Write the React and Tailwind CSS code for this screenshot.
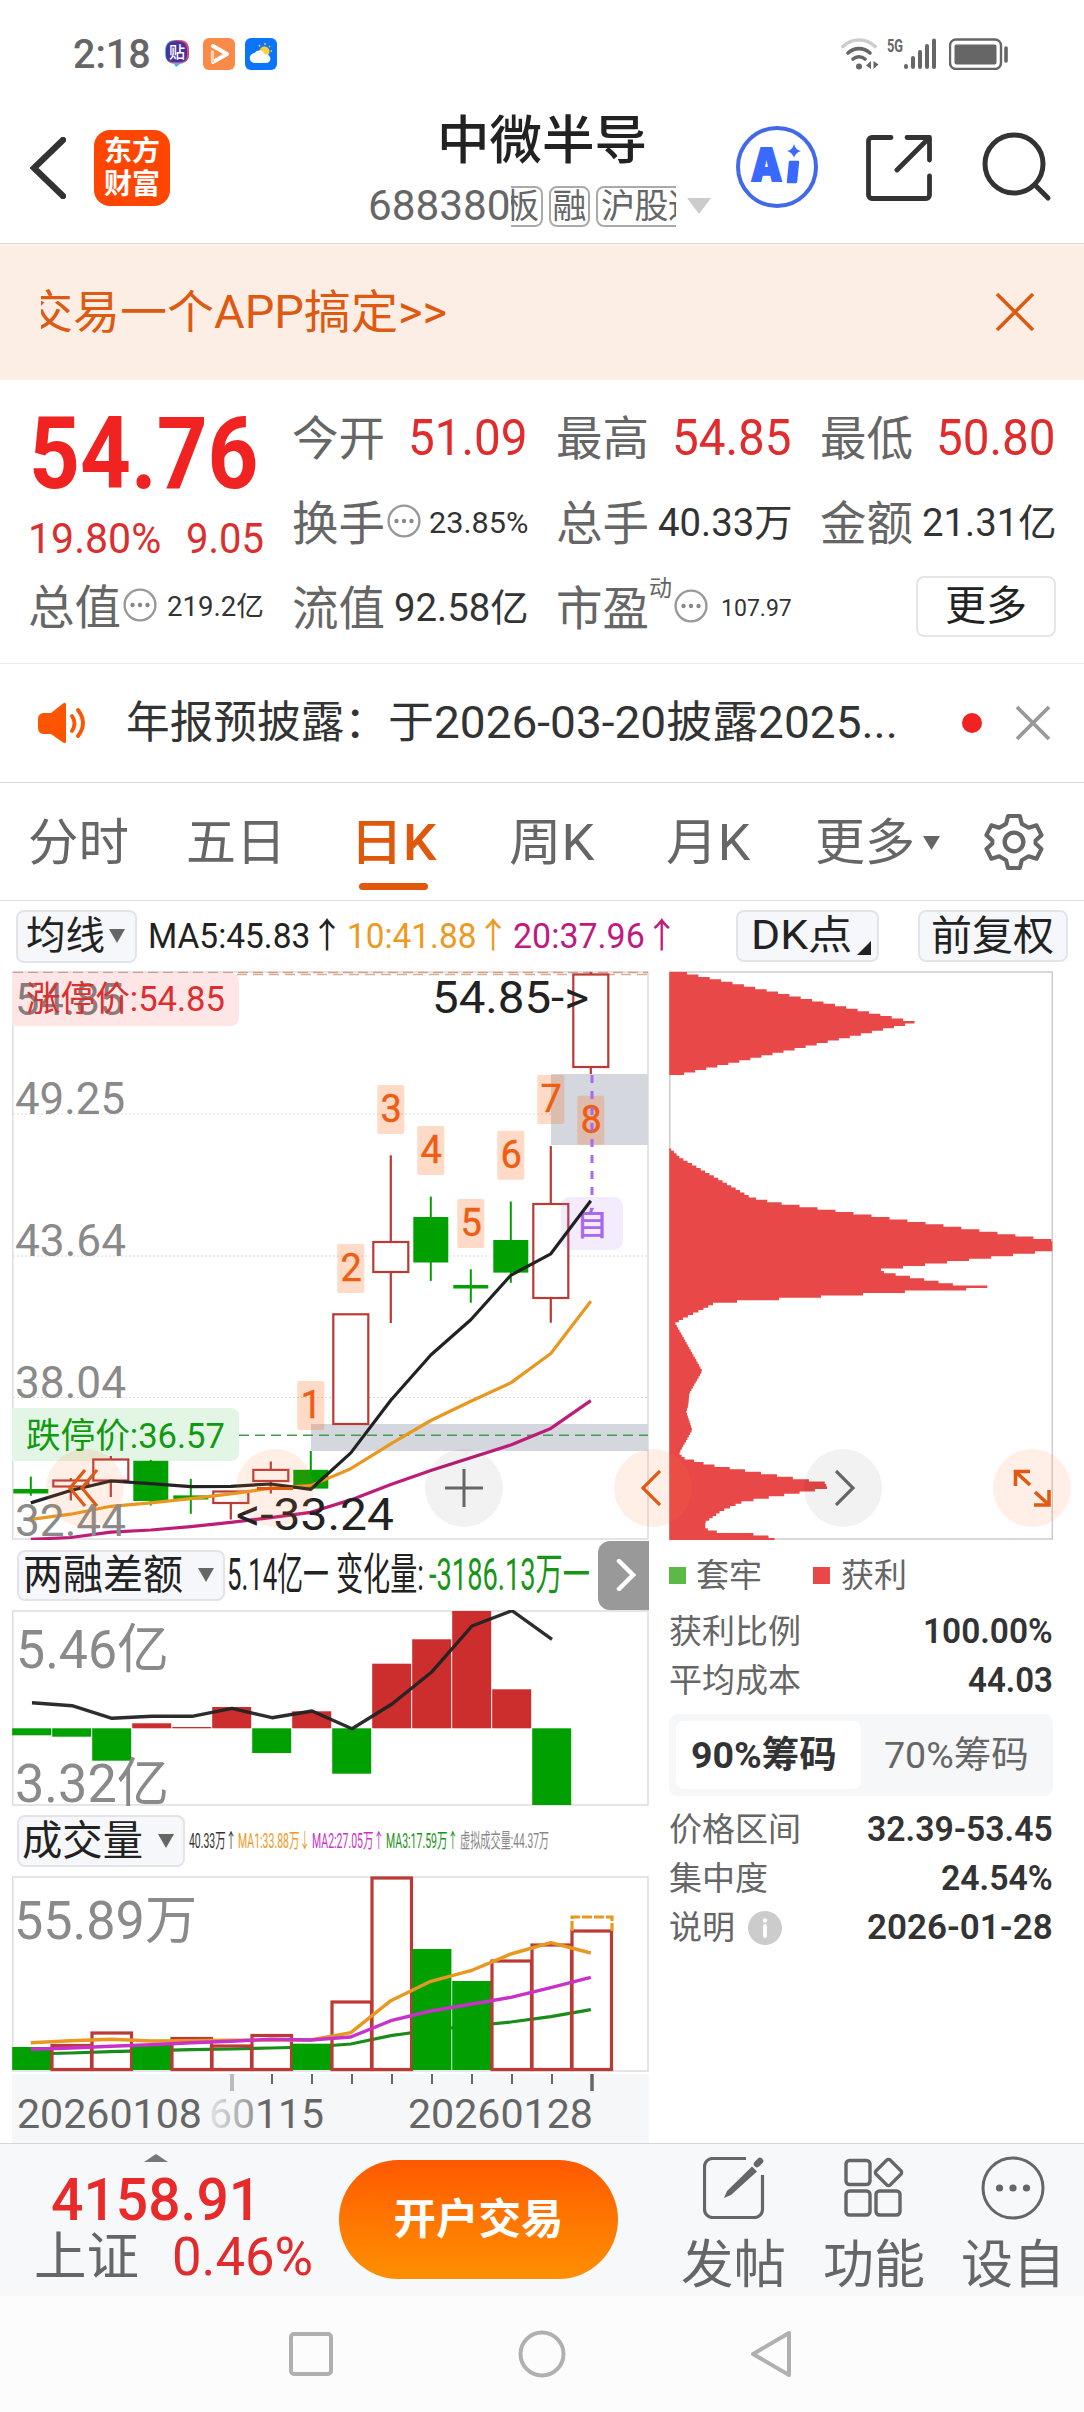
import { useLayoutEffect, useRef, useState } from "react";

const X0 = 30.8;
const STEP = 40;
const RED = "#bb3a36";
const GREEN = "#00a000";

// [type, body top, body bottom, wick top, wick bottom]
const candles = [
    ["g", 1489, 1493.5, 1476.6, 1495.7],
    ["r", 1480.5, 1486.5, 1478, 1500.6],
    ["r", 1459.5, 1480.5, 1455.9, 1496.9],
    ["g", 1460.8, 1501, 1460, 1505.5],
    ["g", 1495.4, 1499.5, 1478.8, 1513.8],
    ["r", 1491.5, 1503, 1491, 1519.4],
    ["r", 1469.9, 1481, 1461.5, 1493.5],
    ["g", 1469.8, 1488.6, 1451, 1488],
    ["r", 1314.3, 1424, 1314, 1424],
    ["r", 1242, 1272, 1155.3, 1323],
    ["g", 1217, 1262.5, 1196.6, 1280.9],
    ["g", 1285, 1288.5, 1269.3, 1302.7],
    ["g", 1240, 1272.6, 1201.5, 1282.8],
    ["r", 1204, 1298, 1145.9, 1322.7],
    ["r", 974.5, 1067, 972, 1074],
];

const ma5 = [1502.9, 1490.5, 1481, 1483.7, 1486.7, 1486.3, 1484, 1489.3, 1452.9, 1400.2, 1355, 1319.7, 1275.3, 1253.8, 1200.8];
const ma10 = [1519.4, 1514.2, 1506.3, 1502.9, 1498.7, 1493.9, 1488.2, 1485.6, 1468.7, 1443.8, 1420.5, 1401.3, 1382.9, 1353.5, 1301.2];
const ma20 = [1539.4, 1537.5, 1532.2, 1530, 1526.6, 1522.4, 1517.6, 1512.3, 1499.9, 1484.5, 1470.5, 1457.7, 1445, 1428.4, 1400.6];

const days = [
    [7, 1381], [8, 1244], [9, 1085], [10, 1126], [11, 1199], [12, 1130.8], [13, 1075], [14, 1095.8],
];

const marginBars = [1735.3, 1736.7, 1760.7, 1723.3, 1727, 1707, 1753, 1711.3, 1773.7, 1663.7, 1639.3, 1611, 1689.3, 1805];
const marginLine = [1702.7, 1705.7, 1718.3, 1716.3, 1716.3, 1708.3, 1717.7, 1711, 1728.7, 1704, 1671.7, 1626, 1610.7, 1639.3];

const volume = [
    ["g", 2047], ["r", 2045.5], ["r", 2033], ["g", 2045], ["r", 2038.5], ["r", 2046], ["r", 2035.5], ["g", 2043.7],
    ["r", 2002], ["r", 1878], ["g", 1949], ["g", 1981], ["r", 1961], ["r", 1945], ["r", 1931],
];
const vol1 = [2042.7, 2040.7, 2039.3, 2041, 2040.7, 2040.3, 2040, 2040, 2032.7, 2000.7, 1981.3, 1970.7, 1954, 1942.7, 1953];
const vol2 = [2049.3, 2048, 2046.3, 2044.7, 2042.7, 2041.3, 2039.3, 2040, 2037, 2020.7, 2011, 2004.3, 1997.3, 1987.7, 1977.3];
const vol3 = [2054, 2053, 2051.7, 2050.7, 2049.7, 2049, 2048, 2047, 2044, 2035.7, 2030, 2026, 2022, 2016.7, 2009.7];

// cost distribution profile: [y, width]
const chips = [
    [972, 12], [1022.4, 246], [1074.3, 12], [1074.8, 0], [1147.8, 0], [1157.6, 10.7], [1197.6, 82], [1202.4, 104],
    [1240.4, 383], [1250.6, 383], [1270.2, 207], [1273.5, 220], [1285.3, 289], [1286.4, 318], [1289, 318], [1289.6, 272],
    [1302.8, 46], [1309, 34], [1318.4, 14], [1323.3, 6], [1371, 33], [1393.5, 20], [1405, 19], [1412, 17],
    [1430, 23], [1453, 10], [1458, 14], [1465, 41], [1470, 72], [1482.9, 156], [1488.2, 158], [1501.6, 74],
    [1511, 52], [1522.4, 36], [1527.3, 36], [1531.4, 41], [1535, 95], [1539.5, 106],
];

const toPoints = (ys, x0 = X0) => ys.map((y, i) => `${x0 + i * STEP},${y}`).join(" ");

// Stepped outline of the distribution, one step per price level
function chipPath() {
    const h = 2.45;
    let d = "M669.3 972";
    for (let y = 972; y < 1538.5; y += h) {
        const mid = y + h / 2;
        const k = chips.findIndex(([cy]) => cy > mid);
        const [ya, wa] = chips[k - 1];
        const [yb, wb] = chips[k];
        const w = wa + ((wb - wa) * (mid - ya)) / (yb - ya);
        d += `H${(669.3 + w).toFixed(1)}V${(y + h).toFixed(2)}`;
    }
    return d + "H669.3Z";
}

// Squeezes or stretches one line of text to the width of its box
function FitText({ className = "", children }) {
    const box = useRef(null);
    const text = useRef(null);
    const [scale, setScale] = useState(1);

    useLayoutEffect(() => {
        setScale(box.current.clientWidth / text.current.offsetWidth);
    }, [children]);

    return (
        <span ref={box} className={`block shrink-0 leading-none ${className}`}>
            <span ref={text} className="inline-block origin-left whitespace-nowrap" style={{ transform: `scaleX(${scale})` }}>
                {children}
            </span>
        </span>
    );
}

function DotsIcon() {
    return (
        <svg viewBox="0 0 34 34" className="w-[34px] h-[34px] shrink-0">
            <circle cx="17" cy="17" r="15.4" fill="none" stroke="#999" strokeWidth="2.4" />
            <circle cx="9.5" cy="17" r="2.2" fill="#888" />
            <circle cx="17" cy="17" r="2.2" fill="#888" />
            <circle cx="24.5" cy="17" r="2.2" fill="#888" />
        </svg>
    );
}

function Caret({ className }) {
    return (
        <svg viewBox="0 0 16 14" preserveAspectRatio="none" className={`shrink-0 ${className}`}>
            <path d="M0 0h16L8 14z" fill="currentColor" />
        </svg>
    );
}

function StatusBar() {
    return (
        <div className="h-[100px] flex items-start pt-[38px] pl-[73px] pr-[75px] text-[#666]">
            <FitText className="w-[78px] text-[41px] font-medium -mt-1">2:18</FitText>
            <svg viewBox="0 0 24 28" className="w-6 h-7 ml-[14px] mt-0.5">
                <path d="M12 0c8 0 12 3 12 11v2c0 7-3 10-9 11l-4 3-2-3c-6-1-9-4-9-11v-2C0 3 4 0 12 0z" fill="#4bb4f5" />
                <path d="M13 0c8 0 11 3 11 11v3c0 6-3 9-10 9H9c-6 0-8-3-8-9v-3C1 4 5 0 13 0z" fill="#e5436f" />
                <path d="M11 1c8 0 11 3 11 10v3c0 6-2 8-8 8H9c-6 0-8-2-8-8v-3C1 4 4 1 11 1z" fill="#47339c" />
                <text x="12" y="18" textAnchor="middle" fontSize="16" fontWeight="500" fill="#fff">贴</text>
            </svg>
            <svg viewBox="0 0 32 32" className="w-8 h-8 ml-[14px]">
                <rect width="32" height="32" rx="6" fill="#f98a47" />
                <path d="M10 8l14 8-14 8" fill="none" stroke="#fff" strokeWidth="4" strokeLinecap="round" strokeLinejoin="round" />
                <path d="M9.5 14v9" stroke="#fdd3b5" strokeWidth="3.4" strokeLinecap="round" />
            </svg>
            <svg viewBox="0 0 32 32" className="w-8 h-8 ml-[10px]">
                <rect width="32" height="32" rx="6" fill="#0b74fb" />
                <path d="M20 5v2M25 8l-1 1M27 13h-1.5M14 7l1 1.5" stroke="#ffcf3a" strokeWidth="1.4" />
                <circle cx="19.5" cy="13.5" r="5" fill="#ffcf3a" />
                <path d="M10 25a5 5 0 0 1-.5-10 6 6 0 0 1 10.5 1.5A4.3 4.3 0 0 1 22 25z" fill="#fff" />
            </svg>
            <svg viewBox="0 0 38 32" className="w-[38px] h-8 ml-auto">
                <path d="M2 8.5a23 23 0 0 1 32 0" fill="none" stroke="#ccc" strokeWidth="3.6" strokeLinecap="round" />
                <path d="M7 15a16 16 0 0 1 22 0" fill="none" stroke="#666" strokeWidth="3.6" strokeLinecap="round" />
                <path d="M12 21a9 9 0 0 1 12 0" fill="none" stroke="#666" strokeWidth="3.6" strokeLinecap="round" />
                <circle cx="18" cy="28.5" r="3" fill="#666" />
                <path d="M30 23v8l-5-3.5zM32.5 23v8l5-4.5z" fill="#666" />
            </svg>
            <svg viewBox="0 0 50 32" className="w-[50px] h-8 ml-2">
                <text x="0" y="14" fontSize="18" fontWeight="700" fill="#666" textLength="16" lengthAdjust="spacingAndGlyphs">5G</text>
                <path d="M19 28v1M26 20v9M33 14v15M40 8v21M47 2.5V29" stroke="#666" strokeWidth="4" strokeLinecap="round" />
            </svg>
            <svg viewBox="0 0 60 32" className="w-[60px] h-8 ml-3">
                <rect x="1" y="1.5" width="51" height="29.5" rx="6" fill="none" stroke="#666" strokeWidth="2.4" />
                <rect x="5.5" y="6.5" width="42" height="20" rx="2" fill="#666" />
                <path d="M57 10v13" stroke="#666" strokeWidth="3.6" strokeLinecap="round" />
            </svg>
        </div>
    );
}

function Header() {
    return (
        <header className="h-36 flex items-start border-b border-[#ddd]">
            <svg viewBox="0 0 36 62" className="w-9 h-[62px] ml-[30px] mt-[37px]">
                <path d="M33 3L4 31l29 28" fill="none" stroke="#333" strokeWidth="6.4" strokeLinecap="round" />
            </svg>
            <div className="w-[76px] h-[76px] ml-7 mt-[30px] rounded-2xl bg-[#ff4600] text-white text-[28px] font-bold leading-[33px] text-center pt-[5px]">
                <div>东方</div>
                <div>财富</div>
            </div>
            <div className="w-[343px] ml-[198px]">
                <FitText className="w-[210px] ml-[69px] mt-[16px] text-[52px] font-medium text-[#222]">中微半导</FitText>
                <div className="flex items-center mt-[16px] h-11 text-[#666]">
                    <FitText className="w-[143px] text-[42px]">688380</FitText>
                    <div className="w-[165px] flex gap-[6px] overflow-hidden text-[34px] leading-[37px]">
                        <span className="shrink-0 w-[38px] -ml-[6px] h-[41px] border-2 border-l-0 border-[#aaa] rounded-r-lg">板</span>
                        <span className="shrink-0 h-[41px] w-[41px] border-2 border-[#aaa] rounded-lg flex justify-center">融</span>
                        <span className="shrink-0 h-[41px] pl-[3px] border-2 border-[#aaa] rounded-lg tracking-[-0.5px]">沪股通</span>
                    </div>
                    <Caret className="w-6 h-[16px] ml-[11px] text-[#ccc]" />
                </div>
            </div>
            <svg viewBox="0 0 82 82" className="w-[82px] h-[82px] ml-[25px] mt-[26px]">
                <circle cx="41" cy="41" r="39" fill="none" stroke="#4169ea" strokeWidth="4" />
                <text x="15" y="55" fontSize="46" fontWeight="900" fill="#3a69ff" stroke="#3a69ff" strokeWidth="2" textLength="31" lengthAdjust="spacingAndGlyphs" className="font-['Inter']">A</text>
                <path d="M54 36h8l-2 20h-8z" fill="#3a69ff" stroke="#3a69ff" strokeWidth="2.4" strokeLinejoin="round" />
                <path d="M58 18q1.5 6 7 7-5.5 1.5-7 7-1.5-5.5-7-7 5.5-1 7-7z" fill="#3a69ff" />
            </svg>
            <svg viewBox="0 0 66 66" className="w-[66px] h-[66px] ml-12 mt-[35px]" fill="none" stroke="#333" strokeWidth="4.8" strokeLinecap="round" strokeLinejoin="round">
                <path d="M25 2.5H6a3.5 3.5 0 0 0-3.5 3.5V60A3.5 3.5 0 0 0 6 63.5H60A3.5 3.5 0 0 0 63.5 60V41" />
                <path d="M41 2.5h22.5V25M63 3L31 35" />
            </svg>
            <svg viewBox="0 0 70 70" className="w-[70px] h-[70px] ml-[50px] mt-8" fill="none" stroke="#333" strokeWidth="5" strokeLinecap="round">
                <circle cx="32" cy="32" r="29" />
                <path d="M53 53l13 13" />
            </svg>
        </header>
    );
}

function Banner() {
    return (
        <div className="h-[136px] flex items-center bg-[#fceee5] pl-[41px] pr-[49px] text-[#dd5a12]">
            <div className="w-[900px] overflow-hidden">
                <FitText className="w-[421px] text-[46px] -ml-[15px] py-1">交易一个APP搞定&gt;&gt;</FitText>
            </div>
            <svg viewBox="0 0 40 40" className="w-10 h-10 ml-auto">
                <path d="M2 2l36 36M38 2L2 38" stroke="currentColor" strokeWidth="3.6" />
            </svg>
        </div>
    );
}

function Cell({ label, value, size = "text-[38px] w-[134px]", icon, note, className = "" }) {
    return (
        <div className={`flex items-center h-[60px] pl-px ${className}`}>
            <FitText className="w-[93px] text-[47px] text-[#666]">{label}</FitText>
            {note && <span className="text-[23px] leading-none text-[#666] mb-10">{note}</span>}
            {icon && <div className="ml-0.5 -mt-1"><DotsIcon /></div>}
            <FitText className={`ml-auto ${size}`}>{value}</FitText>
        </div>
    );
}

function Quote() {
    return (
        <section className="h-[284px] flex border-b border-[#eaeaea] pt-[28px] text-[#333]">
            <div className="w-[237px] ml-[27px]">
                <FitText className="w-[230px] ml-[2px] text-[100px] font-bold text-[#f02222] h-[94px] -mt-4 pt-3">54.76</FitText>
                <div className="flex justify-between text-[42px] text-[#da2f2f] mt-[36px] h-[34px] items-center">
                    <FitText className="w-[133px] ml-px">19.80%</FitText>
                    <FitText className="w-[78px]">9.05</FitText>
                </div>
                <Cell label="总值" icon value="219.2亿" size="text-[27px] w-[97px]" className="mt-[21px]" />
            </div>
            <div className="grid grid-cols-[237px_237px_237px] gap-x-[27px] gap-y-[25px] ml-[27px] content-start">
                <Cell label="今开" value="51.09" size="text-[50px] w-[120px] text-[#e02c2c]" />
                <Cell label="最高" value="54.85" size="text-[50px] w-[120px] text-[#e02c2c]" />
                <Cell label="最低" value="50.80" size="text-[50px] w-[120px] text-[#e02c2c]" />
                <Cell label="换手" icon value="23.85%" size="text-[30px] w-[99px]" />
                <Cell label="总手" value="40.33万" />
                <Cell label="金额" value="21.31亿" />
                <Cell label="流值" value="92.58亿" />
                <Cell label="市盈" note="动" icon value="107.97" size="text-[24px] w-[71px]" />
                <button className="w-[140px] h-[61px] -mt-0.5 ml-auto border-2 border-[#e6e6e6] rounded-lg text-[41px] leading-none text-[#222]">更多</button>
            </div>
        </section>
    );
}

function News() {
    return (
        <div className="h-[119px] flex items-center border-b border-[#ddd] pl-[38px] text-[#333]">
            <svg viewBox="0 0 50 42" className="w-[50px] h-[42px]">
                <path d="M5 11h8L25 1.5q3-2 3 1v37q0 3-3 1L13 32H5q-5-1-5-6v-9q0-5 5-6z" fill="#ff5500" />
                <path d="M34 14q5 7 0 15M40 8q10 13 0 26" fill="none" stroke="#ff5500" strokeWidth="3.8" strokeLinecap="round" />
            </svg>
            <div className="flex ml-[38px] text-[44px]">
                <FitText className="w-[262px]">年报预披露：</FitText>
                <FitText className="w-[510px]">于2026-03-20披露2025...</FitText>
            </div>
            <span className="w-5 h-5 rounded-full bg-[#f02222] ml-[64px]" />
            <svg viewBox="0 0 36 36" className="w-9 h-9 ml-[33px]">
                <path d="M2 2l32 32M34 2L2 34" stroke="#999" strokeWidth="3.8" />
            </svg>
        </div>
    );
}

function Tabs() {
    return (
        <nav className="h-[118px] flex items-center border-b border-[#ddd] pl-[28px] pt-0.5 text-[50px] text-[#666]">
            <FitText className="w-[101px]">分时</FitText>
            <FitText className="w-[100px] ml-[57px]">五日</FitText>
            <div className="relative ml-[64px] text-[#e0580c]">
                <FitText className="w-[87px] font-medium">日K</FitText>
                <span className="absolute left-[9px] top-[65px] w-[69px] h-[7px] rounded-full bg-[#e0580c]" />
            </div>
            <FitText className="w-[85px] ml-[72px]">周K</FitText>
            <FitText className="w-[84px] ml-[72px]">月K</FitText>
            <FitText className="w-[100px] ml-[65px]">更多</FitText>
            <Caret className="w-[17px] h-[14px] ml-2" />
            <svg viewBox="0 0 58 58" className="w-[60px] h-[60px] ml-[44px]" fill="none" stroke="#666" strokeWidth="4.2" strokeLinejoin="round">
                <path d="M23 2.5h12l2 8 7 4 8-2.500 5 10-6 5.500v3l6 5.500-5 10-8-2.500-7 4-2 8H23l-2-8-7-4-8 2.500-5-10 6-5.500v-3L1 22l5-10 8 2.500 7-4z" transform="translate(1.4 .5) scale(.95)" />
                <circle cx="29" cy="28" r="9" />
            </svg>
        </nav>
    );
}

const chipButton = "flex items-center bg-[#f6f7fa] border-2 border-[#e2e4e9] rounded-lg text-[#222]";

function Toolbar() {
    return (
        <div className="h-[70px] flex items-center pl-[16px] text-[35px]">
            <button className={`${chipButton} w-[121px] h-[53px] pl-[8px]`}>
                <FitText className="w-[79px] text-[39px]">均线</FitText>
                <Caret className="w-4 h-[14px] ml-[4px] text-[#666]" />
            </button>
            <FitText className="w-[196px] ml-[11px] text-[#222]">MA5:45.83↑</FitText>
            <FitText className="w-[163px] ml-[3px] text-[#ec9a22]">10:41.88↑</FitText>
            <FitText className="w-[166px] ml-[3px] text-[#c01a80]">20:37.96↑</FitText>
            <button className={`${chipButton} w-[143px] h-[52px] ml-[57px] pl-[8px]`}>
                <FitText className="w-[101px] text-[40px]">DK点</FitText>
                <svg viewBox="0 0 14 14" className="w-[14px] h-[14px] ml-[10px] mt-[24px]">
                    <path d="M14 0v14H0z" fill="#222" />
                </svg>
            </button>
            <button className={`${chipButton} w-[150px] h-[52px] ml-[39px] pl-[11px]`}>
                <FitText className="w-[123px] text-[41px]">前复权</FitText>
            </button>
        </div>
    );
}

function Fit({ x, y, w, size, fill, children, ...rest }) {
    return (
        <text x={x} y={y} textLength={w} lengthAdjust="spacingAndGlyphs" fontSize={size} fill={fill} {...rest}>
            {children}
        </text>
    );
}

function KChart() {
    return (
        <svg viewBox="12 971 637 569" className="block w-[637px] h-[569px]">
            <rect x="12.7" y="972" width="635.3" height="567" fill="#fff" stroke="#ddd" strokeWidth="1.5" />
            <path d="M13 1114H648M13 1256H648M13 1397.5H648" stroke="#ddd" strokeDasharray="2 2" />
            <rect x="551" y="1074" width="97" height="71" fill="#d4d8de" />
            <rect x="311" y="1424" width="337" height="27" fill="#d4d8de" />
            <path d="M13 972.5H648" stroke="#d99a94" strokeWidth="1.4" strokeDasharray="10 5" />
            <path d="M13 974.5H648" stroke="#d3b48a" strokeWidth="1.6" strokeDasharray="10 6" />
            <path d="M239 1435.2H648" stroke="#3f9f4f" strokeWidth="1.5" strokeDasharray="10 6" />

            <path d="M12 973h219a8 8 0 0 1 8 8v37a8 8 0 0 1-8 8H12z" fill="#ffe6e6" />
            <g fontSize="45" fill="#8a8a8a">
                <Fit x="15" y="1015" w="109" fill="#8a7c7c">54.85</Fit>
                <Fit x="15" y="1113.5" w="110">49.25</Fit>
                <Fit x="15" y="1255.7" w="111">43.64</Fit>
                <Fit x="15" y="1397.5" w="111">38.04</Fit>
            </g>
            <Fit x="26" y="1011" w="199" size="35" fill="#dc2f2f">涨停价:54.85</Fit>
            <path d="M12 1408h219a8 8 0 0 1 8 8v37a8 8 0 0 1-8 8H12z" fill="#e3f5e4" />
            <Fit x="26" y="1448" w="199" size="35" fill="#109a10">跌停价:36.57</Fit>

            {days.map(([i, y], n) => (
                <rect key={n} x={X0 + i * STEP - 13.5} y={y} width="27" height="49" rx="2" fill="#fa6414" fillOpacity=".24" />
            ))}

            {candles.map(([type, top, bottom, high, low], i) => {
                const x = X0 + i * STEP;
                if (type === "g") {
                    return (
                        <g key={i} fill={GREEN}>
                            <rect x={x - 1} y={high} width="2" height={low - high} />
                            <rect x={x - 17.5} y={top} width="35" height={bottom - top} />
                        </g>
                    );
                }
                return (
                    <g key={i} stroke={RED} strokeWidth="2.2" fill="#fff">
                        <path d={`M${x} ${high}V${top}M${x} ${bottom}V${low}`} />
                        <rect x={x - 17.5} y={top} width="35" height={bottom - top} />
                    </g>
                );
            })}

            {days.map(([i, y], n) => (
                <text key={n} x={X0 + i * STEP + 0.5} y={y + 37} textAnchor="middle" fontSize="38" fill="#ee5d12" stroke="#ee5d12" strokeWidth=".4">{n + 1}</text>
            ))}
            <path d="M592 1075V1200" stroke="#a868f0" strokeWidth="3" strokeDasharray="8 8" />
            <rect x="561" y="1197" width="62" height="53" rx="9" fill="#a868f0" fillOpacity=".13" />
            <text x="592" y="1235" textAnchor="middle" fontSize="32" fontWeight="500" fill="#a868f0">自</text>

            <g fill="none" strokeWidth="3.2" strokeLinejoin="round">
                <polyline points={toPoints(ma20)} stroke="#bd1c78" />
                <polyline points={toPoints(ma10)} stroke="#e8981f" />
                <polyline points={toPoints(ma5)} stroke="#222" />
            </g>
            <Fit x="15" y="1535.5" w="111" size="45" fill="#8a8a8a">32.44</Fit>
            <Fit x="432" y="1012.7" w="157" size="44" fill="#222">54.85-&gt;</Fit>
            <Fit x="236" y="1529.6" w="158" size="44" fill="#222">&lt;-33.24</Fit>
        </svg>
    );
}

function MarginChart() {
    return (
        <svg viewBox="12 1610 637 196" className="block w-[637px] h-[196px]">
            <rect x="12.7" y="1611" width="635.3" height="194" fill="#fff" stroke="#ddd" strokeWidth="1.5" />
            {marginBars.map((y, i) => (
                <rect
                    key={i}
                    x={12.2 + i * STEP}
                    y={Math.min(y, 1728.3)}
                    width="39"
                    height={Math.abs(y - 1728.3)}
                    fill={y > 1728.3 ? GREEN : "#cc2d2d"}
                />
            ))}
            <Fit x="16" y="1668" w="153" size="53" fill="#8a8a8a">5.46亿</Fit>
            <Fit x="15" y="1802" w="154" size="53" fill="#8a8a8a">3.32亿</Fit>
            <polyline points={toPoints(marginLine, 32)} fill="none" stroke="#222" strokeOpacity=".95" strokeWidth="3.4" strokeLinejoin="round" />
        </svg>
    );
}

function VolumeChart() {
    return (
        <svg viewBox="12 1876 637 196" className="block w-[637px] h-[196px]">
            <rect x="12.7" y="1877" width="635.3" height="194" fill="#fff" stroke="#ddd" strokeWidth="1.5" />
            <Fit x="14" y="1939" w="183" size="53" fill="#8a8a8a">55.89万</Fit>
            <polyline points={toPoints(vol3)} fill="none" stroke="#1a8c1a" strokeWidth="3.2" />
            {volume.map(([type, y], i) =>
                type === "g" ? (
                    <rect key={i} x={12.2 + i * STEP} y={y} width="39.2" height={2070 - y} fill={GREEN} />
                ) : (
                    <rect key={i} x={12 + i * STEP} y={y} width="39.5" height={2069.5 - y} fill="none" stroke={RED} strokeWidth="3.2" />
                )
            )}
            <path d="M572 1931V1917H612V1931" fill="none" stroke="#e8981f" strokeWidth="3.2" strokeDasharray="10 2" />
            <polyline points={toPoints(vol1)} fill="none" stroke="#e8981f" strokeWidth="3.4" strokeLinejoin="round" />
            <polyline points={toPoints(vol2)} fill="none" stroke="#c832c8" strokeWidth="3.4" strokeLinejoin="round" />
        </svg>
    );
}

function DateAxis() {
    return (
        <svg viewBox="12 2072 637 71" className="block w-[637px] h-[71px]">
            <defs>
                <linearGradient id="fade" gradientUnits="userSpaceOnUse" x1="202" x2="262" y1="0" y2="0">
                    <stop offset="0" stopColor="#666" stopOpacity=".05" />
                    <stop offset=".8" stopColor="#666" stopOpacity=".6" />
                    <stop offset="1" stopColor="#666" />
                </linearGradient>
            </defs>
            <rect x="12" y="2074" width="637" height="69" fill="#f6f7f9" />
            <path d="M232 2074V2091" stroke="#bbb" strokeWidth="4" />
            <path d="M272 2074v10M312 2074v10M352 2074v10M392 2074v10M432 2074v10M472 2074v10M512 2074v10M552 2074v10" stroke="#666" strokeWidth="2" />
            <path d="M592 2074V2091" stroke="#666" strokeWidth="3.5" />
            <Fit x="17" y="2128" w="185" size="41" fill="#666">20260108</Fit>
            <Fit x="209" y="2128" w="115" size="41" fill="url(#fade)">60115</Fit>
            <Fit x="408" y="2128" w="185" size="41" fill="#666">20260128</Fit>
        </svg>
    );
}

function LeftPanel() {
    return (
        <div className="w-[637px] ml-3">
            <KChart />
            <div className="h-[70px] flex items-center pl-[5px] text-[44px]">
                <button className={`${chipButton} w-[208px] h-[51px] pl-[4px]`}>
                    <FitText className="w-[160px] text-[41px]">两融差额</FitText>
                    <Caret className="w-4 h-[14px] ml-[15px] text-[#666]" />
                </button>
                <FitText className="w-[102px] ml-[2px] text-[#222]">5.14亿一</FitText>
                <FitText className="w-[88px] ml-[7px] text-[#222]">变化量:</FitText>
                <FitText className="w-[161px] ml-[5px] text-[#189418]">-3186.13万一</FitText>
                <button className="w-[51px] h-[69px] ml-auto rounded-l-xl bg-[#999] flex justify-center items-center">
                    <svg viewBox="0 0 20 32" className="w-5 h-8 ml-1">
                        <path d="M3 2l14 14L3 30" fill="none" stroke="#fff" strokeWidth="4.5" strokeLinecap="round" />
                    </svg>
                </button>
            </div>
            <MarginChart />
            <div className="h-[70px] flex items-center pl-[5px] text-[20px]">
                <button className={`${chipButton} w-[168px] h-[52px] pl-[3px]`}>
                    <FitText className="w-[121px] text-[41px]">成交量</FitText>
                    <Caret className="w-4 h-[14px] ml-[15px] text-[#666]" />
                </button>
                <FitText className="w-[47px] ml-1 text-[#333]">40.33万↑</FitText>
                <FitText className="w-[72px] ml-0.5 text-[#ec9a22]">MA1:33.88万↓</FitText>
                <FitText className="w-[72px] ml-0.5 text-[#c832c8]">MA2:27.05万↑</FitText>
                <FitText className="w-[72px] ml-0.5 text-[#189418]">MA3:17.59万↑</FitText>
                <FitText className="w-[89px] ml-0.5 text-[#888]">虚拟成交量:44.37万</FitText>
            </div>
            <VolumeChart />
            <DateAxis />
        </div>
    );
}

function InfoRow({ label, value, width, children }) {
    return (
        <div className="h-[49px] flex items-center">
            <span className="text-[33px] leading-none text-[#666]">{label}</span>
            {children}
            <FitText className={`ml-auto text-[35px] font-semibold text-[#333] ${width}`}>{value}</FitText>
        </div>
    );
}

function RightPanel() {
    return (
        <div className="w-[384px] ml-5">
            <svg viewBox="669 971 384 569" className="block w-[384px] h-[569px]">
                <rect x="669.8" y="972" width="382.5" height="567" fill="#fff" stroke="#ccc" strokeWidth="1.5" />
                <path d={chipPath()} fill="#e84848" />
            </svg>
            <div className="h-[67px] flex items-center text-[33px] leading-none text-[#666] pt-1">
                <span className="w-[17px] h-[17px] bg-[#5cb947]" />
                <span className="ml-[10px]">套牢</span>
                <span className="w-[17px] h-[17px] bg-[#e84848] ml-[51px]" />
                <span className="ml-[11px]">获利</span>
            </div>
            <InfoRow label="获利比例" value="100.00%" width="w-[130px]" />
            <InfoRow label="平均成本" value="44.03" width="w-[85px]" />
            <div className="mt-[9px] mb-[9px] h-[82px] p-[7px] flex items-center rounded-lg bg-[#f6f7f9]">
                <div className="w-[185px] h-[68px] rounded-lg bg-white pl-[15px] flex items-center">
                    <FitText className="w-[146px] text-[37px] font-bold text-[#333]">90%筹码</FitText>
                </div>
                <FitText className="w-[145px] ml-[23px] text-[37px] text-[#666]">70%筹码</FitText>
            </div>
            <InfoRow label="价格区间" value="32.39-53.45" width="w-[186px]" />
            <InfoRow label="集中度" value="24.54%" width="w-[112px]" />
            <InfoRow label="说明" value="2026-01-28" width="w-[186px]">
                <svg viewBox="0 0 34 34" className="w-[34px] h-[34px] ml-[13px]">
                    <circle cx="17" cy="17" r="17" fill="#ccc" />
                    <circle cx="17" cy="9.5" r="2.2" fill="#fff" />
                    <path d="M17 15v10" stroke="#fff" strokeWidth="3.8" strokeLinecap="round" />
                </svg>
            </InfoRow>
        </div>
    );
}

const roundButton = "absolute top-[478px] w-[78px] h-[78px] rounded-full flex items-center justify-center";

function ChartControls() {
    return (
        <>
            <button className={`${roundButton} left-[46px] bg-[#ff7832]/12 text-[#e05a14]`}>
                <svg viewBox="0 0 32 38" className="w-8 h-[38px] -ml-1" fill="none" stroke="currentColor" strokeWidth="3.2">
                    <path d="M18 1L3 19l15 18M30 1L15 19l15 18" />
                </svg>
            </button>
            <button className={`${roundButton} left-[236px] bg-[#ff7832]/12 text-[#e05a14]`}>
                <span className="w-9 h-[3px] bg-current" />
            </button>
            <button className={`${roundButton} left-[425px] bg-black/5 text-[#666]`}>
                <svg viewBox="0 0 38 38" className="w-[38px] h-[38px]" stroke="currentColor" strokeWidth="3">
                    <path d="M0 19h38M19 0v38" />
                </svg>
            </button>
            <button className={`${roundButton} left-[614px] bg-[#ff7832]/12 text-[#e05a14]`}>
                <svg viewBox="0 0 20 36" className="w-5 h-9 -ml-1" fill="none" stroke="currentColor" strokeWidth="3.2">
                    <path d="M19 1L2 18l17 17" />
                </svg>
            </button>
            <button className={`${roundButton} left-[804px] bg-black/5 text-[#666]`}>
                <svg viewBox="0 0 20 36" className="w-5 h-9 ml-1" fill="none" stroke="currentColor" strokeWidth="3.2">
                    <path d="M1 1l17 17L1 35" />
                </svg>
            </button>
            <button className={`${roundButton} left-[993px] bg-[#ff7832]/12 text-[#e05a14]`}>
                <svg viewBox="0 0 40 38" className="w-10 h-[38px]" fill="none" stroke="currentColor" strokeWidth="3.6">
                    <path d="M18 2.5H3.5V17M4 3l14 13M22 36H37V21M36 35L23 23" />
                </svg>
            </button>
        </>
    );
}

function BottomBar() {
    return (
        <footer className="h-[153px] flex border-t border-[#d4d6da] bg-[#f7f8fa] text-[#666]">
            <div className="w-[305px] pl-[34px]">
                <svg viewBox="0 0 24 8" className="w-6 h-2 ml-[110px] mt-[10px]">
                    <path d="M12 0l12 8H0z" fill="#777" />
                </svg>
                <FitText className="w-[210px] ml-[17px] mt-[8px] text-[60px] text-[#e82a2a] font-medium">4158.91</FitText>
                <div className="flex items-center mt-px">
                    <FitText className="w-[105px] text-[52px]">上证</FitText>
                    <FitText className="w-[141px] ml-[33px] text-[53px] text-[#e02c2c]">0.46%</FitText>
                </div>
            </div>
            <button className="w-[279px] h-[119px] ml-[34px] mt-[16px] pt-0.5 rounded-full bg-linear-to-b from-[#ff5800] to-[#ff8f00] text-white text-[42.5px] font-bold leading-none">
                开户交易
            </button>
            <div className="flex flex-col items-center w-[106px] ml-[62px] pt-[13px]">
                <svg viewBox="0 0 62 62" className="w-[62px] h-[62px] ml-px" fill="none" stroke="#666" strokeWidth="3.2">
                    <path d="M43 1.5H9.5a8 8 0 0 0-8 8v43a8 8 0 0 0 8 8h42a8 8 0 0 0 8-8V18" />
                    <path d="M49 9.500l5 5L28 38l-7 3 3-7z" fill="#666" stroke="none" />
                    <path d="M54 7l3-3" strokeWidth="6.5" strokeLinecap="round" />
                </svg>
                <FitText className="w-[105px] mt-[21px] text-[52px]">发帖</FitText>
            </div>
            <div className="flex flex-col items-center w-[102px] ml-[37px] pt-[13px]">
                <svg viewBox="0 0 60 62" className="w-[60px] h-[62px]" fill="none" stroke="#666" strokeWidth="3.4">
                    <rect x="2" y="3.5" width="24" height="24" rx="3.5" />
                    <rect x="2" y="34" width="24" height="24" rx="3.5" />
                    <rect x="32" y="34" width="24" height="24" rx="3.5" />
                    <rect x="34.5" y="5.5" width="20" height="20" rx="2.5" transform="rotate(45 44.5 15.5)" />
                </svg>
                <FitText className="w-[102px] mt-[21px] text-[52px]">功能</FitText>
            </div>
            <div className="flex flex-col items-center w-[104px] ml-[36px] pt-[12px]">
                <svg viewBox="0 0 64 64" className="w-16 h-16" fill="#666">
                    <circle cx="32" cy="32" r="30" fill="none" stroke="#666" strokeWidth="3" />
                    <circle cx="18.5" cy="32" r="3.6" />
                    <circle cx="32" cy="32" r="3.6" />
                    <circle cx="45.5" cy="32" r="3.6" />
                </svg>
                <FitText className="w-[104px] mt-[20px] text-[52px]">设自</FitText>
            </div>
        </footer>
    );
}

function SystemNav() {
    return (
        <div className="h-[116px] flex items-center bg-[#fcfcfc] pl-[289px]">
            <svg viewBox="0 0 44 44" className="w-11 h-11" fill="none" stroke="#b0b0b0" strokeWidth="4">
                <rect x="2" y="2" width="40" height="40" rx="3" />
            </svg>
            <svg viewBox="0 0 48 48" className="w-12 h-12 ml-[185px]" fill="none" stroke="#b0b0b0" strokeWidth="4">
                <circle cx="24" cy="24" r="21.5" />
            </svg>
            <svg viewBox="0 0 42 48" className="w-[42px] h-12 ml-[184px]" fill="none" stroke="#b0b0b0" strokeWidth="4" strokeLinejoin="round">
                <path d="M39 3v42L3 24z" />
            </svg>
        </div>
    );
}

export default function App() {
    return (
        <div className="w-[1084px] h-[2412px] overflow-hidden bg-white font-['Roboto','Noto_Sans_CJK_SC',sans-serif]">
            <StatusBar />
            <Header />
            <Banner />
            <Quote />
            <News />
            <Tabs />
            <Toolbar />
            <main className="relative flex h-[1172px]">
                <LeftPanel />
                <RightPanel />
                <ChartControls />
            </main>
            <BottomBar />
            <SystemNav />
        </div>
    );
}
